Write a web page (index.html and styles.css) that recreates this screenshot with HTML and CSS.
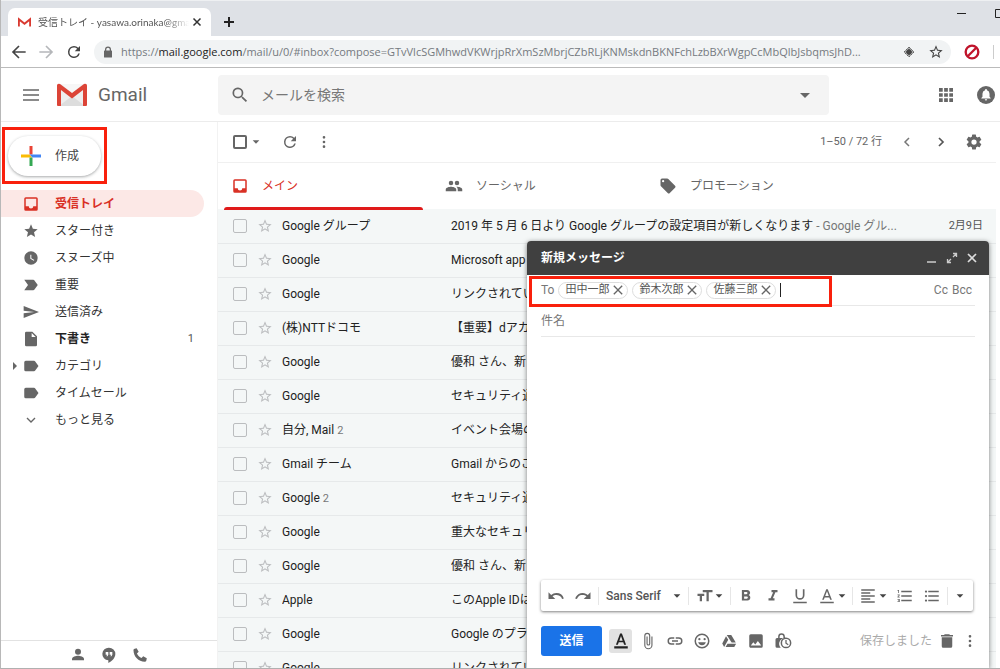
FILE: index.html
```html
<!DOCTYPE html>
<html lang="ja">
<head>
<meta charset="utf-8">
<title>受信トレイ - Gmail</title>
<link rel="stylesheet" href="styles.css">
</head>
<body>
<svg class="defs" aria-hidden="true">
  <symbol id="inbox" viewBox="0 0 24 24"><path d="M19 3H5a2 2 0 0 0-2 2v14a2 2 0 0 0 2 2h14a2 2 0 0 0 2-2V5a2 2 0 0 0-2-2zm0 12h-4a3 3 0 0 1-6 0H5V5h14v10z"/></symbol>
  <symbol id="star" viewBox="0 0 24 24"><path d="M12 17.27 18.18 21l-1.64-7.03L22 9.24l-7.19-.61L12 2 9.19 8.63 2 9.24l5.46 4.73L5.82 21z"/></symbol>
  <symbol id="star-o" viewBox="0 0 24 24"><path d="M22 9.24l-7.19-.62L12 2 9.19 8.63 2 9.24l5.46 4.73L5.82 21 12 17.27 18.18 21l-1.63-7.03L22 9.24zM12 15.4l-3.76 2.27 1-4.28-3.32-2.88 4.38-.38L12 6.1l1.71 4.04 4.38.38-3.32 2.88 1 4.28L12 15.4z"/></symbol>
  <symbol id="reload" viewBox="0 0 24 24"><path d="M17.65 6.35A7.96 7.96 0 0 0 12 4a8 8 0 1 0 7.73 10h-2.08A6 6 0 1 1 12 6c1.66 0 3.14.69 4.22 1.78L13 11h7V4l-2.35 2.35z"/></symbol>
  <symbol id="more" viewBox="0 0 24 24"><path d="M12 7a2 2 0 1 0 0-4 2 2 0 0 0 0 4zm0 3a2 2 0 1 0 0 4 2 2 0 0 0 0-4zm0 7a2 2 0 1 0 0 4 2 2 0 0 0 0-4z"/></symbol>
  <symbol id="label" viewBox="0 0 24 24"><path d="M17.63 5.84A2 2 0 0 0 16 5H5a2 2 0 0 0-2 2v10a2 2 0 0 0 2 2h11c.67 0 1.27-.33 1.63-.84L22 12l-4.37-6.16z"/></symbol>
  <symbol id="close" viewBox="3 3 18 18"><path d="M19 6.41 17.59 5 12 10.59 6.41 5 5 6.41 10.59 12 5 17.59 6.41 19 12 13.41 17.59 19 19 17.59 13.41 12z"/></symbol>
  <symbol id="down" viewBox="0 0 24 24"><path d="M2 7l10 10L22 7z"/></symbol>
</svg>

<header class="tabstrip">
  <div class="tab">
    <svg class="tab-logo" viewBox="0 0 32 24"><path d="M2 22V4l14 11L30 4v18" fill="none" stroke="#d93a31" stroke-width="5"/></svg>
    <span class="tab-title">受信トレイ - yasawa.orinaka@gma</span>
    <button class="plain" aria-label="タブを閉じる"><svg class="i12" viewBox="0 0 24 24"><path d="M5 5l14 14M19 5L5 19" stroke="#333" stroke-width="3"/></svg></button>
  </div>
  <button class="plain new-tab" aria-label="新しいタブ"><svg class="i12" viewBox="0 0 12 12"><path d="M6 1v10M1 6h10" stroke="#222" stroke-width="2"/></svg></button>
  <div class="window-buttons">
    <button class="plain" aria-label="最小化"><svg class="i12" viewBox="0 0 12 12"><path d="M1 6.500h9" stroke="#222" stroke-width="1"/></svg></button>
    <button class="plain" aria-label="最大化"><svg class="i12" viewBox="0 0 12 12"><path d="M1.500 2.500h9v8h-9z" fill="none" stroke="#222"/></svg></button>
  </div>
</header>

<nav class="addressbar">
  <button class="plain" aria-label="戻る"><svg class="i16" viewBox="0 0 24 24"><path d="M22 12H4M12 3l-9 9 9 9" fill="none" stroke="#444" stroke-width="2.500"/></svg></button>
  <button class="plain" aria-label="進む"><svg class="i16" viewBox="0 0 24 24"><path d="M2 12h18M12 3l9 9-9 9" fill="none" stroke="#b5b7ba" stroke-width="2.500"/></svg></button>
  <button class="plain dark" aria-label="再読み込み"><svg class="i18"><use href="#reload"/></svg></button>
  <div class="omnibox">
    <svg class="i12" viewBox="0 0 24 24"><path d="M19 9h-1V7A6 6 0 0 0 6 7v2H5a1 1 0 0 0-1 1v12a1 1 0 0 0 1 1h14a1 1 0 0 0 1-1V10a1 1 0 0 0-1-1zM8.500 9V7a3.500 3.500 0 0 1 7 0v2z"/></svg>
    <span class="url">https://<b>mail.google.com</b>/mail/u/0/#inbox?compose=GTvVlcSGMhwdVKWrjpRrXmSzMbrjCZbRLjKNMskdnBKNFchLzbBXrWgpCcMbQlbJsbqmsJhD...</span>
    <svg class="i12" viewBox="0 0 24 24"><path d="M12 2l10 10-10 10L2 12z" fill="none" stroke="#666" stroke-width="2" stroke-dasharray="5 1"/><path d="M12 4l8 8-8 8-8-8z"/><circle cx="12" cy="12" r="5" fill="#444"/></svg>
    <svg class="i16 dark"><use href="#star-o"/></svg>
  </div>
  <svg class="i16" viewBox="0 0 24 24"><circle cx="12" cy="12" r="9.500" fill="none" stroke="#c0142b" stroke-width="3.500"/><path d="M18 6L6 18" stroke="#c0142b" stroke-width="3.500"/></svg>
  <i class="bar-divider"></i>
</nav>

<header class="topbar">
  <div class="brand">
    <button class="plain" aria-label="メインメニュー"><svg class="i16" viewBox="0 0 16 16"><path d="M0 3h16M0 8h16M0 13h16" stroke="#666" stroke-width="1.500"/></svg></button>
    <svg class="logo" viewBox="0 0 32 24"><path d="M3 1h26v22H3z" fill="#eee"/><path d="M3 23l13-10 13 10z" fill="#ddd"/><path d="M5 1h22L16 10z" fill="#f7f7f7"/><path d="M1 22V3a2 2 0 0 1 3-2l12 9 12-9a2 2 0 0 1 3 2v19a1 1 0 0 1-1 1h-3V7L16 15.500 5 7v16H2a1 1 0 0 1-1-1z" fill="#dc4437"/></svg>
    <span class="brand-name">Gmail</span>
  </div>
  <form class="search">
    <svg class="i20" viewBox="0 0 24 24"><path d="M15.500 14h-.79l-.28-.27A6.500 6.500 0 1 0 13.730 14.430l.27.28v.79l5 4.990L20.490 19l-4.990-5zm-6 0a4.500 4.500 0 1 1 0-9 4.500 4.500 0 0 1 0 9z"/></svg>
    <input type="text" placeholder="メールを検索" aria-label="メールを検索">
    <svg class="i12" viewBox="0 0 12 12"><path d="M1 4l5 5 5-5z"/></svg>
  </form>
  <div class="account">
    <svg class="i14" viewBox="0 0 15 15"><path d="M0 0h4v4H0zM5.500 0h4v4h-4zM11 0h4v4h-4zM0 5.500h4v4H0zM5.500 5.500h4v4h-4zM11 5.500h4v4h-4zM0 11h4v4H0zM5.500 11h4v4h-4zM11 11h4v4h-4z"/></svg>
    <svg class="i18" viewBox="0 0 24 24"><circle cx="12" cy="12" r="12"/><path d="M12 4a1.300 1.300 0 0 0-1.300 1.300v.5A4.700 4.700 0 0 0 7.300 10.300v4L5.800 16v.8h12.400V16l-1.500-1.700v-4a4.700 4.700 0 0 0-3.400-4.500v-.5A1.300 1.300 0 0 0 12 4zm-1.600 13.700a1.600 1.600 0 0 0 3.200 0z" fill="#fff"/></svg>
  </div>
</header>

<main class="workspace">
  <aside class="sidebar">
    <div class="compose-wrap">
      <button class="compose-btn"><svg class="i20" viewBox="0 0 20 20"><path d="M8.500 0h3v8.500h-3z" fill="#ea4335"/><path d="M0 8.500h8.500l3 3H0z" fill="#fbbc04"/><path d="M8.500 11.500h3V20h-3z" fill="#34a853"/><path d="M11.500 8.500H20v3h-8.500l-3-3z" fill="#4285f4"/></svg>作成</button>
    </div>
    <nav class="folders">
      <a href="#" class="folder active"><svg class="i18"><use href="#inbox"/></svg>受信トレイ</a>
      <a href="#" class="folder"><svg class="i16"><use href="#star"/></svg>スター付き</a>
      <a href="#" class="folder"><svg class="i16" viewBox="0 0 24 24"><path d="M12 2a10 10 0 1 0 0 20 10 10 0 0 0 0-20zm4.200 14.200L11 13V7h1.500v5.200l4.500 2.700z"/></svg>スヌーズ中</a>
      <a href="#" class="folder"><svg class="i18" viewBox="0 0 24 24"><path d="M3 19h12c.65 0 1.260-.31 1.630-.84L21 12l-4.370-6.160A2 2 0 0 0 15 5H3l5 7z"/></svg>重要</a>
      <a href="#" class="folder"><svg class="i16" viewBox="0 0 24 24"><path d="M1 21l23-9L1 3v7l16 2-16 2z"/></svg>送信済み</a>
      <a href="#" class="folder bold"><svg class="i16" viewBox="0 0 24 24"><path d="M5 1a2 2 0 0 0-2 2v18a2 2 0 0 0 2 2h14a2 2 0 0 0 2-2V8l-7-7zm8 8V3l6 6z"/></svg>下書き<span class="count">1</span></a>
      <a href="#" class="folder expandable"><svg class="i18"><use href="#label"/></svg>カテゴリ</a>
      <a href="#" class="folder"><svg class="i18"><use href="#label"/></svg>タイムセール</a>
      <a href="#" class="folder"><svg class="i16" viewBox="0 0 24 24"><path d="M6 9l6 6 6-6" fill="none" stroke="#666" stroke-width="2"/></svg>もっと見る</a>
    </nav>
    <div class="chat-bar">
      <svg class="i16" viewBox="0 0 24 24"><circle cx="12" cy="7" r="4.500"/><path d="M3 20v-2c0-3 6-4.700 9-4.700s9 1.700 9 4.700v2z"/></svg>
      <svg class="i16" viewBox="0 0 24 24"><path d="M12 1a9.500 9.500 0 0 0-1 19v4c5-2.400 10.500-7.500 10.500-13.500A9.500 9.500 0 0 0 12 1zm-1 10.500L9.700 14H8l1.300-2.500H7v-4h4zm6 0L15.700 14H14l1.300-2.500H13v-4h4z"/></svg>
      <svg class="i16" viewBox="0 0 24 24"><path d="M4 2.500l3-.7 3 5.400-2.600 2.500c1.500 3 3.800 5.300 6.900 6.900l2.500-2.600 5.400 3-.7 3.200c-.3 1.100-1 1.800-2.200 1.800C9.500 21.500 2.500 14.500 2.200 4.700 2.200 3.500 2.900 2.800 4 2.500z"/></svg>
    </div>
  </aside>

  <section class="content">
    <div class="toolbar">
      <input type="checkbox" class="check strong" aria-label="すべて選択">
      <svg class="i8 select-arrow"><use href="#down"/></svg>
      <button class="plain" aria-label="更新"><svg class="i18"><use href="#reload"/></svg></button>
      <button class="plain more-btn" aria-label="その他"><svg class="i16"><use href="#more"/></svg></button>
      <span class="range">1–50 / 72 行</span>
      <button class="plain" aria-label="前へ"><svg class="i16" viewBox="0 0 16 16"><path d="M10 4L6 8l4 4" fill="none" stroke="#777" stroke-width="1.500"/></svg></button>
      <button class="plain" aria-label="次へ"><svg class="i16" viewBox="0 0 16 16"><path d="M7 4l4 4-4 4" fill="none" stroke="#555" stroke-width="1.700"/></svg></button>
      <button class="plain" aria-label="設定"><svg class="i18" viewBox="0 0 24 24"><path d="M19.430 12.980a7.800 7.800 0 0 0 0-1.960l2.110-1.650a.5.5 0 0 0 .12-.64l-2-3.460a.5.5 0 0 0-.61-.22l-2.490 1a7.300 7.300 0 0 0-1.690-.98l-.38-2.650A.49.49 0 0 0 14 2h-4a.49.49 0 0 0-.49.42l-.38 2.650c-.61.25-1.170.59-1.690.98l-2.490-1a.5.5 0 0 0-.61.22l-2 3.460a.5.5 0 0 0 .12.64l2.110 1.650a7.900 7.900 0 0 0 0 1.960l-2.110 1.650a.5.5 0 0 0-.12.64l2 3.460c.12.220.39.3.61.22l2.490-1c.52.4 1.080.73 1.690.98l.38 2.650c.3.240.24.42.49.42h4c.25 0 .46-.18.49-.42l.38-2.650c.61-.25 1.170-.59 1.690-.98l2.490 1c.23.09.49 0 .61-.22l2-3.460a.5.5 0 0 0-.12-.64zM12 15.500a3.500 3.500 0 1 1 0-7 3.500 3.500 0 0 1 0 7z"/></svg></button>
    </div>
    <nav class="categories">
      <a href="#" class="category current"><svg class="i18"><use href="#inbox"/></svg>メイン</a>
      <a href="#" class="category"><svg class="i18" viewBox="0 0 24 24"><path d="M16 11a3 3 0 1 0 0-6 3 3 0 0 0 0 6zm-8 0a3 3 0 1 0 0-6 3 3 0 0 0 0 6zm0 2c-2.330 0-7 1.170-7 3.500V19h14v-2.500c0-2.330-4.670-3.500-7-3.500zm8 0-.97.050A4.200 4.200 0 0 1 17 16.500V19h6v-2.500c0-2.330-4.670-3.500-7-3.500z"/></svg>ソーシャル</a>
      <a href="#" class="category"><svg class="i18" viewBox="0 0 24 24"><path d="M21.410 11.580l-9-9A2 2 0 0 0 11 2H4a2 2 0 0 0-2 2v7c0 .55.22 1.050.59 1.420l9 9a2 2 0 0 0 2.820 0l7-7a2 2 0 0 0 0-2.840zM5.500 7a1.500 1.500 0 1 1 0-3 1.500 1.500 0 0 1 0 3z"/></svg>プロモーション</a>
    </nav>
    <table class="mails">
      <colgroup><col class="c-check"><col class="c-star"><col class="c-from"><col><col class="c-date"></colgroup>
      <tbody>
      <tr><td><input type="checkbox" class="check" aria-label="選択"></td><td><svg class="i16 st"><use href="#star-o"/></svg></td><td>Google グループ</td><td>2019 年 5 月 6 日より Google グループの設定項目が新しくなります<span class="snippet"> - Google グル...</span></td><td class="date">2月9日</td></tr>
      <tr><td><input type="checkbox" class="check" aria-label="選択"></td><td><svg class="i16 st"><use href="#star-o"/></svg></td><td>Google</td><td>Microsoft app</td><td></td></tr>
      <tr><td><input type="checkbox" class="check" aria-label="選択"></td><td><svg class="i16 st"><use href="#star-o"/></svg></td><td>Google</td><td>リンクされてい</td><td></td></tr>
      <tr><td><input type="checkbox" class="check" aria-label="選択"></td><td><svg class="i16 st"><use href="#star-o"/></svg></td><td>(株)NTTドコモ</td><td>【重要】dアカ</td><td></td></tr>
      <tr><td><input type="checkbox" class="check" aria-label="選択"></td><td><svg class="i16 st"><use href="#star-o"/></svg></td><td>Google</td><td>優和 さん、新</td><td></td></tr>
      <tr><td><input type="checkbox" class="check" aria-label="選択"></td><td><svg class="i16 st"><use href="#star-o"/></svg></td><td>Google</td><td>セキュリティ通</td><td></td></tr>
      <tr><td><input type="checkbox" class="check" aria-label="選択"></td><td><svg class="i16 st"><use href="#star-o"/></svg></td><td>自分, Mail <small>2</small></td><td>イベント会場の</td><td></td></tr>
      <tr><td><input type="checkbox" class="check" aria-label="選択"></td><td><svg class="i16 st"><use href="#star-o"/></svg></td><td>Gmail チーム</td><td>Gmail からのご</td><td></td></tr>
      <tr><td><input type="checkbox" class="check" aria-label="選択"></td><td><svg class="i16 st"><use href="#star-o"/></svg></td><td>Google <small>2</small></td><td>セキュリティ通</td><td></td></tr>
      <tr><td><input type="checkbox" class="check" aria-label="選択"></td><td><svg class="i16 st"><use href="#star-o"/></svg></td><td>Google</td><td>重大なセキュリ</td><td></td></tr>
      <tr><td><input type="checkbox" class="check" aria-label="選択"></td><td><svg class="i16 st"><use href="#star-o"/></svg></td><td>Google</td><td>優和 さん、新</td><td></td></tr>
      <tr><td><input type="checkbox" class="check" aria-label="選択"></td><td><svg class="i16 st"><use href="#star-o"/></svg></td><td>Apple</td><td>このApple IDは</td><td></td></tr>
      <tr><td><input type="checkbox" class="check" aria-label="選択"></td><td><svg class="i16 st"><use href="#star-o"/></svg></td><td>Google</td><td>Google のプラ</td><td></td></tr>
      <tr><td><input type="checkbox" class="check" aria-label="選択"></td><td><svg class="i16 st"><use href="#star-o"/></svg></td><td>Google</td><td>リンクされてい</td><td></td></tr>
      </tbody>
    </table>
  </section>

  <section class="compose">
    <header class="compose-head">
      <h2>新規メッセージ</h2>
      <button class="plain" aria-label="最小化"><svg class="i12" viewBox="0 0 12 12"><path d="M1 10h9" stroke="#ccc" stroke-width="1.500"/></svg></button>
      <button class="plain" aria-label="全画面表示"><svg class="i12" viewBox="0 0 12 12"><path d="M7 1.500h3.500V5M10 2L7 5M5 10.500H1.500V7M2 10l3-3" fill="none" stroke="#ccc" stroke-width="1.300"/></svg></button>
      <button class="plain" aria-label="閉じる"><svg class="i12" viewBox="0 0 12 12"><path d="M2 2l8 8M10 2l-8 8" stroke="#ddd" stroke-width="1.700"/></svg></button>
    </header>
    <div class="line to-line">
      <label for="to">To</label>
      <span class="chip">田中一郎<button class="plain" aria-label="削除"><svg class="i12"><use href="#close"/></svg></button></span>
      <span class="chip">鈴木次郎<button class="plain" aria-label="削除"><svg class="i12"><use href="#close"/></svg></button></span>
      <span class="chip">佐藤三郎<button class="plain" aria-label="削除"><svg class="i12"><use href="#close"/></svg></button></span>
      <i class="text-cursor"></i>
      <input type="text" id="to">
      <a href="#">Cc</a><a href="#">Bcc</a>
    </div>
    <div class="line"><input type="text" placeholder="件名" aria-label="件名"></div>
    <textarea class="message" aria-label="本文"></textarea>
    <div class="format">
      <div class="group">
        <button class="plain" aria-label="元に戻す"><svg class="i18" viewBox="0 0 24 24"><path d="M12.500 8c-2.650 0-5.050.99-6.900 2.600L2 7v9h9l-3.620-3.620A8 8 0 0 1 20.080 16l2.370-.78A10.500 10.500 0 0 0 12.500 8z"/></svg></button>
        <button class="plain" aria-label="やり直す"><svg class="i18" viewBox="0 0 24 24"><path d="M18.400 10.600A10.500 10.500 0 0 0 1.540 15.220L3.900 16a8 8 0 0 1 12.720-3.620L13 16h9V7z"/></svg></button>
      </div>
      <button class="plain group font-name">Sans Serif<svg class="i8"><use href="#down"/></svg></button>
      <button class="plain group size" aria-label="サイズ"><svg class="i18" viewBox="0 0 24 24"><path d="M9 4v3h5v12h3V7h5V4zM2 12h3v7h3v-7h3V9H2z"/></svg><svg class="i8"><use href="#down"/></svg></button>
      <div class="group styles">
        <button class="plain" aria-label="太字"><svg class="i18" viewBox="0 0 24 24"><path d="M15.600 10.790A4 4 0 0 0 17.500 8c0-2.260-1.750-4-4-4H6.500v14h7.540c2.090 0 3.710-1.700 3.710-3.790 0-1.520-.86-2.820-2.150-3.420zM9.500 6.500h3a1.500 1.500 0 0 1 0 3h-3zm3.500 9H9.500v-3H13a1.500 1.500 0 0 1 0 3z"/></svg></button>
        <button class="plain" aria-label="斜体"><svg class="i18" viewBox="0 0 24 24"><path d="M10 4v3h2.210l-3.420 8H6v3h8v-3h-2.210l3.420-8H18V4z"/></svg></button>
        <button class="plain" aria-label="下線"><svg class="i18" viewBox="0 0 24 24"><path d="M12 17a6 6 0 0 0 6-6V3h-2.200v8a3.800 3.800 0 0 1-7.600 0V3H6v8a6 6 0 0 0 6 6zm-9 2.500v2h18v-2z"/></svg></button>
        <button class="plain" aria-label="文字色"><svg class="i18" viewBox="0 0 24 24"><path d="M11 3L5.500 17h2.200l1.200-3h6.200l1.200 3h2.200L13 3zm-1.400 9L12 5.700l2.400 6.300zM3 19.500h18v2H3z"/></svg><svg class="i8"><use href="#down"/></svg></button>
      </div>
      <div class="group lists">
        <button class="plain" aria-label="配置"><svg class="i18" viewBox="0 0 24 24"><path d="M15 15H3v2h12zm0-8H3v2h12zM3 13h18v-2H3zm0 8h18v-2H3zM3 3v2h18V3z"/></svg><svg class="i8"><use href="#down"/></svg></button>
        <button class="plain" aria-label="番号付きリスト"><svg class="i18" viewBox="0 0 24 24"><path d="M2 17h2v.5H3v1h1v.5H2v1h3v-4H2zm1-9h1V4H2v1h1zm-1 3h1.800L2 13.100v.9h3v-1H3.200L5 10.900V10H2zm5-6v2h14V5zm0 14h14v-2H7zm0-6h14v-2H7z"/></svg></button>
        <button class="plain" aria-label="箇条書き"><svg class="i18" viewBox="0 0 24 24"><path d="M4 10.500a1.500 1.500 0 1 0 0 3 1.500 1.500 0 0 0 0-3zm0-6a1.500 1.500 0 1 0 0 3 1.500 1.500 0 0 0 0-3zm0 12a1.500 1.500 0 1 0 0 3 1.500 1.500 0 0 0 0-3zM7 19h14v-2H7zm0-6h14v-2H7zm0-8v2h14V5z"/></svg></button>
      </div>
      <button class="plain group last" aria-label="その他の書式"><svg class="i8"><use href="#down"/></svg></button>
    </div>
    <footer class="actions">
      <button class="send">送信</button>
      <button class="plain on" aria-label="書式設定"><svg class="i18" viewBox="0 0 24 24"><path d="M10.800 2L5.200 17h2.600l1.200-3.200h6l1.200 3.200h2.600L13.200 2zm-1 9.500L12 5.400l2.200 6.100zM3 19h18v3H3z"/></svg></button>
      <button class="plain" aria-label="添付"><svg class="i18" viewBox="0 0 24 24"><path d="M16.500 6v11.500a4 4 0 0 1-8 0V5a2.500 2.500 0 0 1 5 0v10.500a1 1 0 0 1-2 0V6H10v9.500a2.500 2.500 0 0 0 5 0V5a4 4 0 0 0-8 0v12.500a5.500 5.500 0 0 0 11 0V6z"/></svg></button>
      <button class="plain" aria-label="リンク"><svg class="i18" viewBox="0 0 24 24"><path d="M3.900 12A3.100 3.100 0 0 1 7 8.900h4V7H7a5 5 0 0 0 0 10h4v-1.900H7A3.100 3.100 0 0 1 3.900 12zM8 13h8v-2H8zm9-6h-4v1.900h4a3.100 3.100 0 0 1 0 6.200h-4V17h4a5 5 0 0 0 0-10z"/></svg></button>
      <button class="plain" aria-label="絵文字"><svg class="i18" viewBox="0 0 24 24"><path d="M12 2a10 10 0 1 0 0 20 10 10 0 0 0 0-20zm0 18a8 8 0 1 1 0-16 8 8 0 0 1 0 16zm3.500-9a1.500 1.500 0 1 0 0-3 1.500 1.500 0 0 0 0 3zm-7 0a1.500 1.500 0 1 0 0-3 1.500 1.500 0 0 0 0 3zM12 17.500a5.500 5.500 0 0 0 5.100-3.900H6.900A5.500 5.500 0 0 0 12 17.500z"/></svg></button>
      <button class="plain" aria-label="ドライブ"><svg class="i18" viewBox="0 0 24 24"><path d="M9 4h6l6 10h-5.500zM8 5.500l3 4.700L5.500 20 3 15.300zM10 15.500h11.500L19 20H7.400z"/></svg></button>
      <button class="plain" aria-label="画像"><svg class="i18" viewBox="0 0 24 24"><path d="M21 19V5a2 2 0 0 0-2-2H5a2 2 0 0 0-2 2v14c0 1.100.9 2 2 2h14a2 2 0 0 0 2-2zM8.500 13.500l2.500 3 3.500-4.500 4.500 6H5z"/></svg></button>
      <button class="plain" aria-label="情報保護モード"><svg class="i18" viewBox="0 0 24 24"><path d="M16 8h-1.500V6a4.500 4.500 0 0 0-9 0v2H4a2 2 0 0 0-2 2v9a2 2 0 0 0 2 2h5a8 8 0 0 1 9-12.700A2 2 0 0 0 16 8zM7.500 8V6a2.500 2.500 0 0 1 5 0v2z"/><circle cx="16" cy="14.500" r="6.200" fill="#fff" stroke="#666" stroke-width="2"/><path d="M16 10.500V15l3 2" fill="none" stroke="#666" stroke-width="1.700"/></svg></button>
      <div class="draft-tools">
        <span class="saved">保存しました</span>
        <button class="plain" aria-label="下書きを破棄"><svg class="i18" viewBox="0 0 24 24"><path d="M5 19a2 2 0 0 0 2 2h10a2 2 0 0 0 2-2V7H5zM20 4h-4l-1-1H9L8 4H4v2h16z"/></svg></button>
        <button class="plain" aria-label="その他のオプション"><svg class="i16"><use href="#more"/></svg></button>
      </div>
    </footer>
  </section>
</main>
</body>
</html>
```

FILE: styles.css
```css
*, *::before, *::after { box-sizing: border-box; }
body {
  margin: 0;
  height: 100vh;
  display: flex;
  flex-direction: column;
  overflow: hidden;
  border-left: 1px solid #b8b8b8;
  border-bottom: 1px solid #b0b0b0;
  background: #fff;
  color: #222;
  font: 12px/16px Roboto, "Noto Sans CJK JP", sans-serif;
}
a { color: inherit; text-decoration: none; }
svg { fill: #666; flex: none; display: block; }
input, textarea, button { font: inherit; color: inherit; }
.defs { position: absolute; width: 0; height: 0; }
.i8 { width: 8px; height: 8px; }
.i12 { width: 12px; height: 12px; }
.i14 { width: 14px; height: 14px; }
.i16 { width: 16px; height: 16px; }
.i18 { width: 18px; height: 18px; }
.i20 { width: 20px; height: 20px; }
.plain { border: 0; background: none; padding: 0; display: flex; align-items: center; }
.dark, .dark svg { fill: #444; }

/* browser frame */
.tabstrip { flex: none; display: flex; align-items: flex-start; height: 36px; padding-left: 7px; background: #dee1e6; border-top: 1px solid #eef0f2; }
.tab { display: flex; align-items: center; width: 203px; height: 28px; margin-top: 7px; padding: 0 8px 0 10px; background: #fff; border-radius: 7px 7px 0 0; font: 10px/16px Lato, "Noto Sans CJK JP", sans-serif; color: #555; }
.tab-logo { width: 13px; height: 11px; margin-right: 7px; }
.tab-title { flex: 1; overflow: hidden; white-space: nowrap; margin-right: 2px; mask-image: linear-gradient(to right, #000 85%, transparent); }
.new-tab { margin: 15px 0 0 12px; }
.window-buttons { display: flex; gap: 26px; margin: 6px -6px 0 auto; }
.addressbar { flex: none; display: flex; align-items: center; height: 32px; padding: 0 6px 0 10px; border-bottom: 1px solid #bbb; }
.addressbar > .plain { margin-right: 11px; }
.omnibox { flex: 1; min-width: 0; display: flex; align-items: center; height: 24px; margin-right: 13px; padding: 0 7px 0 8px; border-radius: 12px; background: #f1f3f4; }
.url { flex: 1; min-width: 0; overflow: hidden; white-space: nowrap; margin: 0 12px 0 7px; font: 11px/16px "Open Sans", sans-serif; color: #757a80; }
.url b { font-weight: 400; color: #222; }
.omnibox .dark { margin-left: 13px; }
.bar-divider { width: 1px; height: 14px; margin-left: 13px; background: #ccc; }

/* application header */
.topbar { flex: none; display: flex; align-items: center; height: 54px; border-bottom: 1px solid #ececec; padding-right: 5px; }
.brand { display: flex; align-items: center; width: 217px; padding-left: 22px; }
.logo { width: 32px; height: 24px; margin: 0 10px 0 17px; }
.brand-name { font: 19px/24px Roboto, sans-serif; color: #666; }
.search { flex: 1; display: flex; align-items: center; max-width: 611px; height: 40px; padding: 0 18px 0 12px; border-radius: 4px; background: #f4f4f4; }
.search input { flex: 1; min-width: 0; margin-left: 11px; padding: 0; border: 0; outline: 0; background: none; font-size: 14px; }
input::placeholder { color: #777; opacity: 1; }
.account { display: flex; align-items: center; gap: 24px; margin-left: auto; }

.workspace { flex: 1; min-height: 0; display: flex; position: relative; }

/* sidebar */
.sidebar { flex: none; width: 217px; display: flex; flex-direction: column; border-right: 1px solid #f2f2f2; }
.compose-wrap { position: relative; padding: 14px 0 14px 7px; }
.compose-wrap::after { content: ""; position: absolute; top: 5px; left: 1px; width: 105px; height: 57px; border: 3px solid #f9200c; pointer-events: none; }
.compose-btn { display: flex; align-items: center; gap: 14px; width: 93px; height: 40px; padding: 0 13px; border: 0; border-radius: 20px; background: #fff; color: #444; box-shadow: 0 1px 3px rgba(60, 64, 67, .45); }
.folders { flex: 1; }
.folder { position: relative; display: flex; align-items: center; gap: 15px; height: 27px; margin-right: 13px; padding: 0 10px 0 21px; border-radius: 0 14px 14px 0; color: #333; }
.folder .i16 { margin: 0 1px; }
.folder.active { background: #fce8e6; color: #d93025; font-weight: 700; }
.active svg, .current svg { fill: #d93025; }
.folder.bold { font-weight: 700; color: #222; }
.count { margin-left: auto; font-size: 11px; font-weight: 400; color: #555; }
.expandable::before { content: ""; position: absolute; left: 12px; border: 4px solid transparent; border-left-color: #666; border-right: 0; }
.chat-bar { display: flex; align-items: center; justify-content: center; gap: 15px; height: 28px; border-top: 1px solid #e2e2e2; }

/* message list */
.content { flex: 1; min-width: 0; padding-right: 4px; overflow: hidden; }
.toolbar { display: flex; align-items: center; height: 41px; padding: 0 13px 0 15px; border-bottom: 1px solid #f0f0f0; }
.check { appearance: none; display: block; width: 14px; height: 14px; margin: 0; border: 1px solid #bbbdbf; border-radius: 2px; }
.check.strong { border: 2px solid #666; }
.select-arrow { margin: 0 21px 0 5px; }
.more-btn { margin-left: 17px; }
.range { margin-left: auto; font-size: 11px; color: #666; }
.toolbar .range ~ .plain { margin-left: 17px; }
.categories { display: flex; height: 46px; }
.category { position: relative; display: flex; align-items: center; gap: 13px; width: 214px; padding-left: 13px; color: #666; }
.category.current { color: #d93025; }
.current::after { content: ""; position: absolute; left: 6px; right: 9px; bottom: -1px; height: 3px; border-radius: 3px 3px 0 0; background: #e01a1a; }
.mails { width: 100%; table-layout: fixed; border-collapse: collapse; background: #f4f7f7; }
.mails tr { height: 34px; border-bottom: 1px solid #e6e9ea; }
.mails td { padding: 0; overflow: hidden; white-space: nowrap; text-overflow: ellipsis; }
.mails td:first-child { padding-left: 15px; }
.c-check { width: 39px; }
.c-star { width: 25px; }
.c-from { width: 169px; }
.c-date { width: 84px; }
.mails td.date { padding-right: 13px; text-align: right; font-size: 11px; color: #555; }
.st { fill: #bcbec0; }
.snippet, .mails small { color: #777; }
.mails small { font-size: 11px; }

/* compose window */
.compose { position: absolute; right: 11px; bottom: 0; width: 462px; height: 427px; display: flex; flex-direction: column; background: #fff; border-radius: 4px 4px 0 0; box-shadow: 0 1px 5px rgba(0, 0, 0, .5); }
.compose-head { display: flex; align-items: center; gap: 8px; height: 34px; padding: 0 11px 0 14px; border-radius: 4px 4px 0 0; background: #404040; color: #fff; }
.compose-head h2 { flex: 1; margin: 0; font-size: 12px; line-height: 16px; font-weight: 700; }
.line { display: flex; align-items: center; height: 31px; margin: 0 14px; border-bottom: 1px solid #e8e8e8; color: #777; }
.line input { flex: 1; min-width: 0; padding: 0; border: 0; outline: 0; background: none; }
.to-line { position: relative; gap: 4px; }
.to-line::after { content: ""; position: absolute; left: -12px; top: 1px; width: 303px; height: 31px; border: 3px solid #f9200c; pointer-events: none; }
.to-line a:last-child { margin-right: 3px; }
.chip { display: flex; align-items: center; gap: 3px; height: 17px; padding: 0 3px 0 6px; border: 1px solid #ddd; border-radius: 9px; font-size: 11px; color: #555; }
.text-cursor { width: 1px; height: 14px; background: #222; }
.message { flex: 1; margin: 0 14px; padding: 8px 0; border: 0; outline: 0; resize: none; background: none; }
.format { display: flex; align-items: center; height: 31px; margin: 0 16px 0 14px; border-radius: 2px; box-shadow: 0 1px 3px rgba(0, 0, 0, .5); }
.group { display: flex; align-items: center; height: 18px; border-right: 1px solid #e6e6e6; }
.group:first-child { gap: 9px; padding: 0 6px; }
.font-name { gap: 12px; padding: 0 7px; font-weight: 500; color: #555; }
.size { gap: 1px; padding: 0 7px; }
.styles, .lists { gap: 9px; padding: 0 6px; }
.format .plain .i8 { fill: #444; }
.styles .i8, .lists .i8 { margin-left: 2px; }
.group.last { border: 0; margin: 0 auto; }
.actions { display: flex; align-items: center; gap: 9px; height: 57px; padding: 2px 11px 0 14px; }
.send { width: 61px; height: 30px; padding: 0; border: 0; border-radius: 3px; background: #1a73e8; color: #fff; font-weight: 700; }
.on { justify-content: center; width: 23px; height: 24px; margin: 0 -2px; border-radius: 3px; background: #e2e2e2; }
.on svg { fill: #222; }
.draft-tools { display: flex; align-items: center; gap: 6px; margin-left: auto; }
.saved { color: #aaa; }
```
